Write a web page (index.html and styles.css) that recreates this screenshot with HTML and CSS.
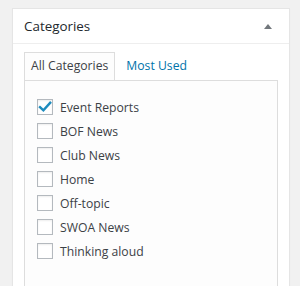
FILE: index.html
```html
<!DOCTYPE html>
<html lang="en">
<head>
    <meta charset="UTF-8">
    <meta name="viewport" content="width=device-width, initial-scale=1.0">
    <title>Categories</title>
    <link rel="stylesheet" href="styles.css">
</head>
<body>

    <div class="postbox">
        <div class="postbox-header">
            <h2>Categories</h2>
            <span class="toggle-arrow"></span>
        </div>

        <div class="inside">
            <ul class="category-tabs">
                <li class="tab active">All Categories</li>
                <li class="tab"><a href="#">Most Used</a></li>
            </ul>

            <div class="tabs-panel">
                <ul class="category-list">
                    <li>
                        <span class="checkbox checked">
                            <svg width="16" height="16" viewBox="0 0 16 16"><path d="M3 8.2 L6.4 11.4 L13.2 3.8" fill="none" stroke="#1e8cbe" stroke-width="2.4" stroke-linecap="square"/></svg>
                        </span>
                        Event Reports
                    </li>
                    <li><span class="checkbox"></span>BOF News</li>
                    <li><span class="checkbox"></span>Club News</li>
                    <li><span class="checkbox"></span>Home</li>
                    <li><span class="checkbox"></span>Off-topic</li>
                    <li><span class="checkbox"></span>SWOA News</li>
                    <li><span class="checkbox"></span>Thinking aloud</li>
                </ul>
            </div>
        </div>
    </div>

</body>
</html>
```

FILE: styles.css
```css
body {
    background-color: #f1f1f1;
    font-family: "Open Sans", Arial, sans-serif;
    color: #3c4146;
    margin: 0;
    padding: 8px 10px 0 12px;
    height: 286px;
    box-sizing: border-box;
    overflow: hidden;
}

.postbox {
    background-color: #ffffff;
    border: 1px solid #e5e5e5;
    border-bottom: none;
    box-shadow: 0 1px 1px rgba(0, 0, 0, 0.04);
    height: 278px;
    box-sizing: border-box;
}

.postbox-header {
    display: flex;
    align-items: center;
    justify-content: space-between;
    height: 34px;
    padding: 0 12px 0 11px;
    border-bottom: 1px solid #eeeeee;
}

.postbox-header h2 {
    margin: 0;
    font-size: 13.4px;
    font-weight: 400;
    color: #23282d;
}

.toggle-arrow {
    width: 0;
    height: 0;
    border-left: 4px solid transparent;
    border-right: 4px solid transparent;
    border-bottom: 5px solid #72777c;
    margin-right: 5px;
}

.inside {
    padding: 8px 11px 0 11px;
}

.category-tabs {
    display: flex;
    list-style: none;
    margin: 0;
    padding: 0;
    font-size: 12.2px;
}

.tab {
    height: 27px;
    line-height: 26px;
    padding: 0 6px;
    margin-right: 4px;
    border: 1px solid transparent;
    border-bottom: none;
}

.tab a {
    color: #0073aa;
    text-decoration: none;
}

.tab.active {
    background-color: #fdfdfd;
    border-color: #dddddd;
    position: relative;
    top: 1px;
    margin-top: -1px;
}

.tabs-panel {
    background-color: #fdfdfd;
    border: 1px solid #dddddd;
    height: 193px;
    padding: 14px 12px 0 12px;
}

.category-list {
    list-style: none;
    margin: 0;
    padding: 0;
    font-size: 12.2px;
}

.category-list li {
    display: flex;
    align-items: center;
    gap: 7px;
    height: 24px;
}

.checkbox {
    width: 14px;
    height: 14px;
    border: 1px solid #b4b9be;
    background-color: #ffffff;
    box-shadow: inset 0 1px 2px rgba(0, 0, 0, 0.07);
    position: relative;
}

.checkbox svg {
    position: absolute;
    left: -1px;
    top: -1px;
}
```
